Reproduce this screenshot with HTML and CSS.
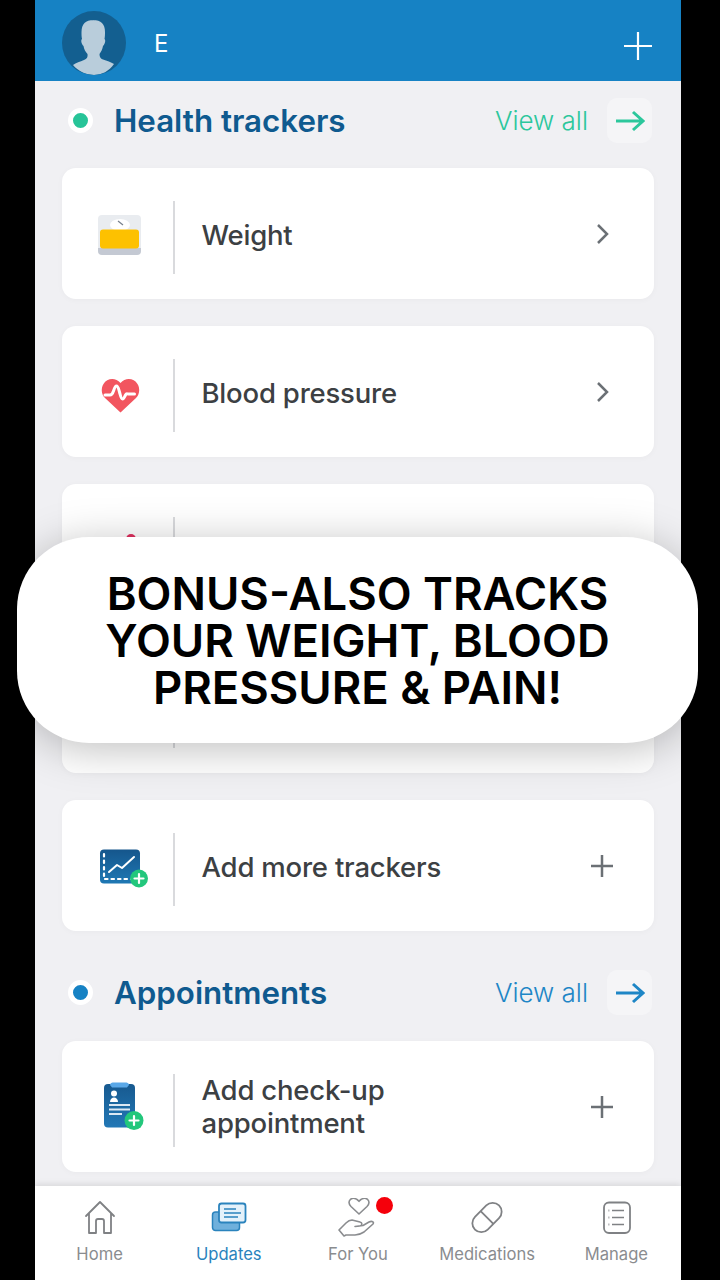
FILE: index.html
```html
<!DOCTYPE html>
<html lang="en">
<head>
  <meta charset="UTF-8">
  <title>Updates</title>
  <link rel="stylesheet" href="styles.css">
</head>
<body>
  <div class="phone">
    <header class="topbar">
      <svg class="avatar" width="64" height="64" viewBox="0 0 64 64">
        <defs><clipPath id="avatar-clip"><circle cx="32" cy="32" r="32"/></clipPath></defs>
        <circle cx="32" cy="32" r="32" fill="#135f90"/>
        <path clip-path="url(#avatar-clip)" fill="#b9cddb" d="M31 9c8 0 12 4 12 12 0 2 0 5-.5 7 1.500 1 .5 5-1.500 7-.5 3-2 6-3.500 8 0 3 1 4.500 3.500 5.500 4 1.500 8 2.500 11 4.500-5 7-12 11-20 11s-16-4-21-10c3-2 7-3.500 11-5 3-1 4-3 3.500-6-2-2-3.500-5-4-8-2-2-3-6-1.500-7-.5-2-.5-5-.5-7 0-8 4-12 12-12z"/>
      </svg>
      <span class="user-name">E</span>
      <svg class="top-plus" width="28" height="28" viewBox="0 0 28 28"><path d="M14 0v28M0 14h28" stroke="#fff" stroke-width="2.200"/></svg>
    </header>

    <main class="content">
      <div class="section-head">
        <span class="dot dot-green"></span>
        <h2 class="section-title">Health trackers</h2>
        <span class="view-all green">View all</span>
        <span class="arrow-btn">
          <svg width="30" height="22" viewBox="0 0 30 22"><path d="M1 11h27M18 2l10 9-10 9" fill="none" stroke="#2cc79c" stroke-width="3"/></svg>
        </span>
      </div>

      <div class="cards">
        <div class="card">
          <span class="card-icon">
            <svg width="60" height="60" viewBox="0 0 60 60">
              <rect x="8" y="11" width="43" height="39" rx="4" fill="#e9ecf0"/>
              <path d="M8 44h43v3a4 4 0 0 1-4 4H12a4 4 0 0 1-4-4z" fill="#c4c9d3"/>
              <ellipse cx="30" cy="21" rx="10" ry="6" fill="#fff"/>
              <path d="M28 17l5 4" stroke="#77808c" stroke-width="1.200"/>
              <rect x="10" y="25.500" width="39" height="19" rx="3" fill="#fdc100"/>
            </svg>
          </span>
          <span class="sep"></span>
          <span class="card-label">Weight</span>
          <svg class="chevron" width="14" height="22" viewBox="0 0 14 22"><path d="M2 2l9 9-9 9" fill="none" stroke="#6b7075" stroke-width="2.500"/></svg>
        </div>

        <div class="card">
          <span class="card-icon">
            <svg width="60" height="60" viewBox="0 0 60 60">
              <path d="M30.500 50.500 15 36c-4-4-4-10-1.500-14 3.500-6 12-7 17-1 5-6 13.500-5 17 1 2.500 4 2.500 10-1.500 14z" fill="#f2555f"/>
              <path d="M15 33h5c2 0 2.500-1 3.500-4s1.500-5 3-5 2 2.500 3 6 1.500 7 3 7 2-2 3-4 1.500-1 3-1h6" fill="none" stroke="#fff" stroke-width="3" stroke-linecap="round"/>
            </svg>
          </span>
          <span class="sep"></span>
          <span class="card-label">Blood pressure</span>
          <svg class="chevron" width="14" height="22" viewBox="0 0 14 22"><path d="M2 2l9 9-9 9" fill="none" stroke="#6b7075" stroke-width="2.500"/></svg>
        </div>

        <div class="card">
          <span class="card-icon">
            <svg width="60" height="60" viewBox="0 0 60 60"><circle cx="41" cy="19" r="5" fill="#e0305f"/></svg>
          </span>
          <span class="sep"></span>
        </div>

        <div class="card">
          <span class="card-icon"></span>
          <span class="sep"></span>
        </div>

        <div class="card">
          <span class="card-icon">
            <svg width="60" height="60" viewBox="0 0 60 60">
              <defs><linearGradient id="chart-fill" x1="0" y1="0" x2="0" y2="1"><stop offset="0" stop-color="#15568c"/><stop offset="1" stop-color="#1f78b4"/></linearGradient></defs>
              <rect x="10" y="13.500" width="40" height="34" rx="4" fill="url(#chart-fill)"/>
              <path d="M14 18v25h32" fill="none" stroke="#fff" stroke-width="2.200" stroke-dasharray="2.500 4" stroke-linecap="round"/>
              <path d="M19 36l8-7 5 3 12-11" fill="none" stroke="#fff" stroke-width="2" stroke-linecap="round" stroke-linejoin="round"/>
              <circle cx="49" cy="42.500" r="9" fill="#23c77c"/>
              <path d="M49 38v9M44.500 42.500h9" stroke="#fff" stroke-width="2.200" stroke-linecap="round"/>
            </svg>
          </span>
          <span class="sep"></span>
          <span class="card-label">Add more trackers</span>
          <svg class="plus" width="24" height="24" viewBox="0 0 24 24"><path d="M12 1v22M1 12h22" stroke="#6b7075" stroke-width="2.500"/></svg>
        </div>
      </div>

      <div class="section-head second">
        <span class="dot dot-blue"></span>
        <h2 class="section-title">Appointments</h2>
        <span class="view-all blue">View all</span>
        <span class="arrow-btn">
          <svg width="30" height="22" viewBox="0 0 30 22"><path d="M1 11h27M18 2l10 9-10 9" fill="none" stroke="#1e86c6" stroke-width="3"/></svg>
        </span>
      </div>

      <div class="cards">
        <div class="card">
          <span class="card-icon">
            <svg width="60" height="60" viewBox="0 0 60 60">
              <defs><linearGradient id="clip-fill" x1="0" y1="0" x2="0" y2="1"><stop offset="0" stop-color="#17598f"/><stop offset="1" stop-color="#2278b6"/></linearGradient></defs>
              <rect x="14" y="7" width="31" height="43.500" rx="4" fill="url(#clip-fill)"/>
              <path d="M20 8c0-2 2-2.500 4-2.500h11c2 0 4 .5 4 2.500l-2 2.500H22z" fill="#5aa8e8"/>
              <circle cx="24" cy="16.500" r="3" fill="#fff"/>
              <path d="M20 25c0-3 2-4.500 4-4.500s4 1.500 4 4.500z" fill="#fff"/>
              <path d="M19 28h21M19 32.500h21M19 37h13" stroke="#dbe8f3" stroke-width="1.800"/>
              <circle cx="44" cy="43.500" r="9.500" fill="#23c77c"/>
              <path d="M44 39v9M39.500 43.500h9" stroke="#fff" stroke-width="2.200" stroke-linecap="round"/>
            </svg>
          </span>
          <span class="sep"></span>
          <span class="card-label two-line">Add check-up<br>appointment</span>
          <svg class="plus" width="24" height="24" viewBox="0 0 24 24"><path d="M12 1v22M1 12h22" stroke="#6b7075" stroke-width="2.500"/></svg>
        </div>
      </div>
    </main>

    <nav class="tabbar">
      <div class="tab">
        <svg width="40" height="40" viewBox="0 0 40 40"><path d="M6 18 20 4l14 14M9 15.500V35h7V23a2 2 0 0 1 2-2h4a2 2 0 0 1 2 2v12h7V15.500" fill="none" stroke="#7f8184" stroke-width="1.800" stroke-linejoin="round" stroke-linecap="round"/></svg>
        <span class="tab-label">Home</span>
      </div>
      <div class="tab active">
        <svg width="40" height="40" viewBox="0 0 40 40">
          <rect x="3.500" y="14" width="27" height="18.500" rx="3" fill="#6fb0dc" stroke="#2a83bd" stroke-width="1.500"/>
          <rect x="10" y="5.500" width="26.500" height="19" rx="2.500" fill="#e4f1fa" stroke="#2a83bd" stroke-width="1.800"/>
          <path d="M15 11h12M15 15h17M15 19h14" stroke="#2a83bd" stroke-width="1.600"/>
        </svg>
        <span class="tab-label">Updates</span>
      </div>
      <div class="tab">
        <svg width="40" height="40" viewBox="0 0 40 40">
          <path d="M21 16 13 8.500c-2.500-2.500-2.500-5.500-.5-7.200 2.500-1.800 6-1 8.500 2 2.500-3 6-3.800 8.500-2 2 1.700 2 4.700-.5 7.200z" fill="none" stroke="#8a8c8f" stroke-width="1.600" stroke-linejoin="round"/>
          <path d="M1 32l7-7c2-2 4-3 6-3l8 2c2.500.5 2.500 3.500 0 4l-5 .5 8-1 6-3.500c3-1.500 5.500 0 4 2l-9 8c-3 2-6 3-9 3H8l-2 1z" fill="none" stroke="#8a8c8f" stroke-width="1.600" stroke-linejoin="round"/>
        </svg>
        <span class="tab-label">For You</span>
        <span class="badge"></span>
      </div>
      <div class="tab">
        <svg width="40" height="40" viewBox="0 0 40 40">
          <g transform="rotate(-45 20 19.500)" fill="none" stroke="#7f8184" stroke-width="1.800">
            <rect x="3" y="10.500" width="34" height="18" rx="9"/>
            <path d="M20 10.500v18"/>
          </g>
        </svg>
        <span class="tab-label">Medications</span>
      </div>
      <div class="tab">
        <svg width="40" height="40" viewBox="0 0 40 40">
          <rect x="8" y="4.500" width="26" height="30.500" rx="5" fill="none" stroke="#7f8184" stroke-width="1.800"/>
          <path d="M16 12.500h12M16 19.500h12M16 26.500h12" stroke="#7f8184" stroke-width="1.600"/>
          <path d="M12.500 12.500h.8M12.500 19.500h.8M12.500 26.500h.8" stroke="#7f8184" stroke-width="1.800"/>
        </svg>
        <span class="tab-label">Manage</span>
      </div>
    </nav>
  </div>

  <div class="caption">BONUS-ALSO TRACKS<br>YOUR WEIGHT, BLOOD<br>PRESSURE &amp; PAIN!</div>
</body>
</html>
```

FILE: styles.css
```css
body {
  margin: 0;
  background: #000;
  font-family: Inter, "Liberation Sans", sans-serif;
  position: relative;
  width: 720px;
  height: 1280px;
  overflow: hidden;
}
.phone {
  width: 646px;
  height: 1280px;
  margin-left: 35px;
  background: #f0f0f3;
  display: flex;
  flex-direction: column;
}
.topbar {
  height: 81px;
  flex-shrink: 0;
  background: #1682c4;
  display: flex;
  align-items: center;
  padding: 0 29px 0 27px;
  box-sizing: border-box;
}
.avatar {
  margin-top: 5px;
}
.user-name {
  color: #fff;
  font-size: 24px;
  margin-left: 28px;
  margin-top: 5px;
}
.top-plus {
  margin-left: auto;
  margin-top: 10px;
}
.content {
  flex: 1;
  overflow: hidden;
}
.section-head {
  display: flex;
  align-items: center;
  height: 45px;
  padding: 17px 29px 25px 33px;
}
.section-head.second {
  padding: 39px 29px 26px 33px;
}
.dot {
  width: 15px;
  height: 15px;
  border-radius: 50%;
  border: 5px solid #fff;
}
.dot-green {
  background: #27c498;
}
.dot-blue {
  background: #1682c4;
}
.section-title {
  margin: 0 0 0 21px;
  font-size: 31.300px;
  font-weight: 600;
  color: #0f5a8f;
}
.view-all {
  margin-left: auto;
  font-size: 26px;
  font-weight: 300;
}
.view-all.green {
  color: #2cc79c;
}
.view-all.blue {
  color: #1e86c6;
}
.arrow-btn {
  width: 45px;
  height: 45px;
  margin-left: 19px;
  background: #f5f5f7;
  border-radius: 10px;
  display: flex;
  align-items: center;
  justify-content: center;
}
.cards {
  display: flex;
  flex-direction: column;
  gap: 27px;
  margin: 0 27px;
}
.card {
  height: 131px;
  background: #fff;
  border-radius: 14px;
  display: flex;
  align-items: center;
  box-shadow: 0 1px 6px rgba(0, 0, 0, 0.03);
}
.card-icon {
  width: 111px;
  height: 60px;
  flex-shrink: 0;
  padding-left: 28px;
  box-sizing: border-box;
}
.sep {
  width: 1.500px;
  height: 73px;
  margin-top: 7px;
  background: #d9dadd;
  flex-shrink: 0;
}
.card-label {
  margin-left: 27px;
  margin-top: 4px;
  font-size: 27.500px;
  line-height: 33px;
  font-weight: 500;
  letter-spacing: -0.2px;
  color: #3c4043;
}
.card-label.two-line {
  margin-top: 0;
}
.chevron {
  margin-left: auto;
  margin-right: 44px;
}
.plus {
  margin-left: auto;
  margin-right: 40px;
}
.tabbar {
  height: 94px;
  flex-shrink: 0;
  background: #fff;
  display: flex;
  box-shadow: 0 -2px 6px rgba(0, 0, 0, 0.1);
}
.tab {
  width: 129.200px;
  padding-top: 12px;
  display: flex;
  flex-direction: column;
  align-items: center;
  position: relative;
}
.tab-label {
  margin-top: 6px;
  font-size: 16.600px;
  line-height: 20px;
  color: #8a8c8f;
}
.tab.active .tab-label {
  color: #2a83bd;
}
.badge {
  position: absolute;
  top: 11px;
  left: 83px;
  width: 17px;
  height: 17px;
  border-radius: 50%;
  background: #f5000b;
}
.caption {
  position: absolute;
  left: 17px;
  top: 537px;
  width: 681px;
  height: 206px;
  background: #fff;
  border-radius: 72px;
  box-shadow: 0 6px 44px rgba(0, 0, 0, 0.26);
  display: flex;
  align-items: center;
  justify-content: center;
  text-align: center;
  color: #000;
  font-size: 45.400px;
  line-height: 47px;
  font-weight: 600;
}
```
